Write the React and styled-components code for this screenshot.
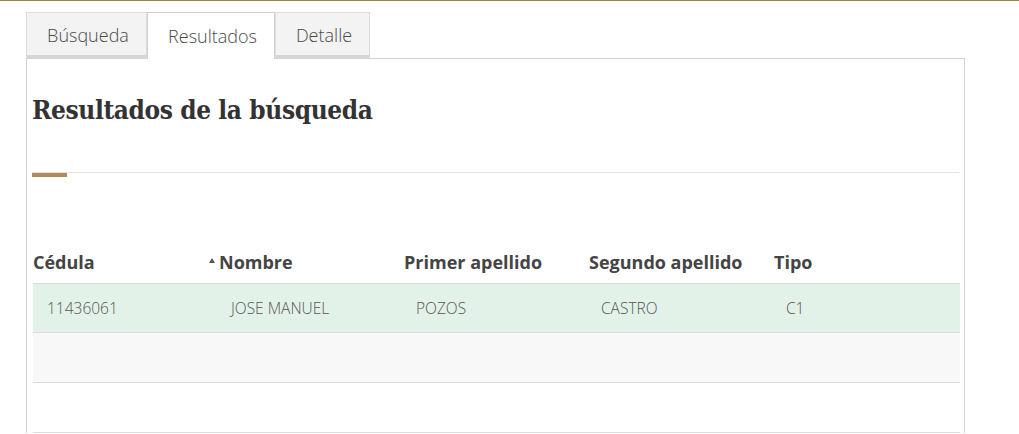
import React from 'react';
import styled, { createGlobalStyle } from 'styled-components';

const GlobalStyle = createGlobalStyle`
    body {
        margin: 0;
        background: #fff;
        font-family: "Open Sans", "Liberation Sans", sans-serif;
    }
`;

const Page = styled.div`
    border-top: 1px solid #a08552;
    padding: 11px 54px 0 26px;
    height: 433px;
    overflow: hidden;
    box-sizing: border-box;
`;

const TabBar = styled.div`
    display: flex;
    height: 46px;
    position: relative;
    z-index: 1;
`;

const Tab = styled.div`
    display: flex;
    align-items: center;
    justify-content: center;
    width: ${p => p.$w}px;
    padding: 0 0 1px 3px;
    font-size: 18px;
    font-weight: 300;
    color: #4a4a4a;
    box-sizing: border-box;
    border: 1px solid #ddd;
    border-bottom: none;
    background: ${p => (p.$active ? '#fff' : '#f3f3f3')};
    box-shadow: ${p => (p.$active ? 'none' : 'inset 0 -3px 0 #d6d6d6')};
    height: ${p => (p.$active ? '47px' : '46px')};
    border-color: ${p => (p.$active ? '#d0d0d0' : '#ddd')};
`;

const Panel = styled.div`
    border: 1px solid #d4d4d4;
    padding: 0 5px 0 5px;
    height: 400px;
`;

const Title = styled.h2`
    margin: 0;
    padding-top: 34px;
    font-family: "DejaVu Serif", "Liberation Serif", serif;
    font-stretch: condensed;
    font-weight: bold;
    font-size: 26px;
    letter-spacing: -0.4px;
    color: #333;
    line-height: 34px;
`;

const Divider = styled.div`
    margin-top: 45px;
    height: 5px;
    border-top: 1px solid #e3e3e3;
    position: relative;
`;

const Accent = styled.span`
    position: absolute;
    left: 0;
    top: 0;
    width: 35px;
    height: 4px;
    background: #ac8d5b;
`;

const Table = styled.div`
    margin-top: 66px;
    width: 927px;
    margin-left: 1px;
`;

const Row = styled.div`
    display: grid;
    grid-template-columns: repeat(5, 185px);
    height: ${p => p.$h || 49}px;
    box-sizing: border-box;
    border-bottom: 1px solid #dcdcdc;
    background: ${p => p.$bg || 'transparent'};
    align-items: ${p => (p.$head ? 'end' : 'center')};
`;

const Th = styled.div`
    position: relative;
    font-weight: 700;
    font-size: 18px;
    color: #444;
    padding: 0 0 9px ${p => (p.$first ? 0 : 1)}px;
`;

const SortArrow = styled.span`
    position: absolute;
    left: -9px;
    top: 8px;
    width: 0;
    height: 0;
    border-left: 3.5px solid transparent;
    border-right: 3.5px solid transparent;
    border-bottom: 5px solid #555;
`;

const Td = styled.div`
    font-size: 15.5px;
    font-weight: 300;
    color: #555;
    padding-left: ${p => (p.$first ? 14 : 13)}px;
`;

const rows = [
    { cedula: '11436061', nombre: 'JOSE MANUEL', primer: 'POZOS', segundo: 'CASTRO', tipo: 'C1' },
];

export default function App() {
    return (
        <>
            <GlobalStyle />
            <Page>
                <TabBar>
                    <Tab $w={121}>Búsqueda</Tab>
                    <Tab $active $w={128}>Resultados</Tab>
                    <Tab $w={95}>Detalle</Tab>
                </TabBar>
                <Panel>
                    <Title>Resultados de la búsqueda</Title>
                    <Divider><Accent /></Divider>
                    <Table>
                        <Row $head $h={40}>
                            <Th $first>Cédula</Th>
                            <Th><SortArrow />Nombre</Th>
                            <Th>Primer apellido</Th>
                            <Th>Segundo apellido</Th>
                            <Th>Tipo</Th>
                        </Row>
                        {rows.map(r => (
                            <Row key={r.cedula} $bg="#e3f2e8">
                                <Td $first>{r.cedula}</Td>
                                <Td>{r.nombre}</Td>
                                <Td>{r.primer}</Td>
                                <Td>{r.segundo}</Td>
                                <Td>{r.tipo}</Td>
                            </Row>
                        ))}
                        <Row $bg="#f8f8f8" $h={50} />
                        <Row $h={50} />
                    </Table>
                </Panel>
            </Page>
        </>
    );
}
